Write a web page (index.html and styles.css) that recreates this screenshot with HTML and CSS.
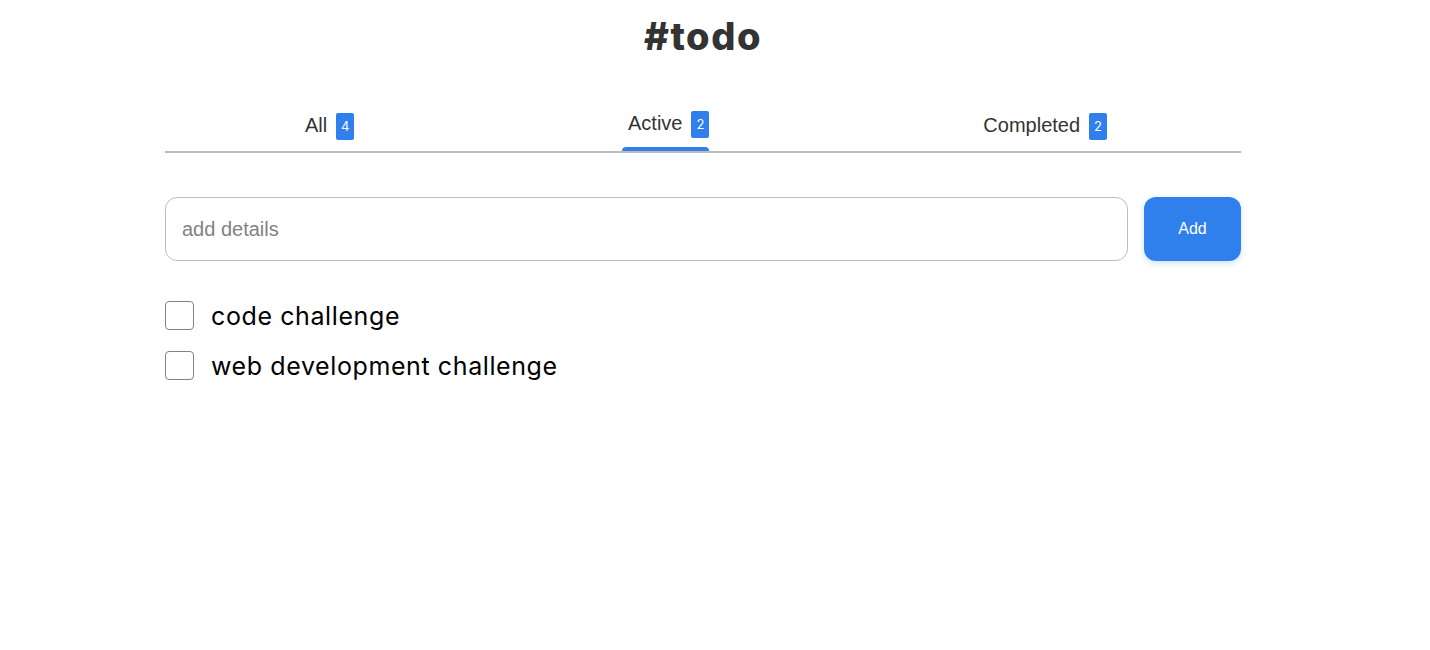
FILE: index.html
```html
<!DOCTYPE html>
<html lang="en">
<head>
<meta charset="utf-8">
<title>#todo</title>
<link rel="stylesheet" href="styles.css">
</head>
<body>
<main class="app">
  <h1 class="title">#todo</h1>
  <nav class="tabs">
    <a class="tab"><span class="tab-label"><span class="tab-text">All</span><span class="badge">4</span></span></a>
    <a class="tab tab-active"><span class="tab-label"><span class="tab-text">Active</span><span class="badge">2</span></span></a>
    <a class="tab"><span class="tab-label"><span class="tab-text">Completed</span><span class="badge">2</span></span></a>
  </nav>
  <form class="add-form">
    <input class="add-input" type="text" placeholder="add details">
    <button class="add-btn" type="button">Add</button>
  </form>
  <ul class="todo-list">
    <li class="todo-item"><span class="checkbox"></span><span class="todo-text">code challenge</span></li>
    <li class="todo-item"><span class="checkbox"></span><span class="todo-text">web development challenge</span></li>
  </ul>
</main>
</body>
</html>
```
FILE: styles.css
```css
html, body {
  margin: 0;
  padding: 0;
  background: #ffffff;
}
body {
  padding-right: 24px;
  font-family: "Liberation Sans", Arial, sans-serif;
  color: #333333;
}
.app {
  width: 1076px;
  margin: 0 auto;
}
.title {
  margin: 14px 0 0;
  text-align: center;
  font-family: Inter, "DejaVu Sans", sans-serif;
  font-weight: 800;
  font-size: 38px;
  line-height: 44px;
  letter-spacing: 1.5px;
  color: #333333;
}
.tabs {
  display: flex;
  justify-content: space-around;
  align-items: flex-end;
  margin-top: 53px;
  border-bottom: 2px solid #bdbdbd;
}
.tab {
  display: flex;
  flex-direction: column;
  padding-bottom: 11px;
  cursor: pointer;
}
.tab-label {
  display: flex;
  align-items: center;
  padding-left: 6px;
}
.tab-text {
  font-size: 20px;
  line-height: 27px;
  color: #333333;
  margin-top: -2px;
}
.badge {
  margin-left: 9px;
  width: 18px;
  height: 27px;
  line-height: 27px;
  text-align: center;
  background: #2f80ed;
  color: #ffffff;
  border-radius: 2px;
  font-family: Inter, "DejaVu Sans", sans-serif;
  font-size: 13px;
}
.tab-active {
  padding-bottom: 0;
}
.tab-active::after {
  content: "";
  display: block;
  height: 4px;
  margin-top: 9px;
  background: #2f80ed;
  border-radius: 4px 4px 0 0;
}
.add-form {
  display: flex;
  gap: 16px;
  margin-top: 44px;
}
.add-input {
  flex: 1;
  height: 64px;
  box-sizing: border-box;
  border: 1px solid #bdbdbd;
  border-radius: 12px;
  padding: 0 16px;
  font-family: "Liberation Sans", Arial, sans-serif;
  font-size: 20px;
  color: #333333;
  outline: none;
}
.add-input::placeholder {
  color: #828282;
}
.add-btn {
  width: 97px;
  height: 64px;
  border: none;
  border-radius: 12px;
  background: #2f80ed;
  color: #ffffff;
  font-family: "Liberation Sans", Arial, sans-serif;
  font-size: 16px;
  box-shadow: 0 2px 6px rgba(127, 177, 243, 0.4);
  cursor: pointer;
}
.todo-list {
  list-style: none;
  margin: 40px 0 0;
  padding: 0;
  display: flex;
  flex-direction: column;
  gap: 21px;
}
.todo-item {
  display: flex;
  align-items: center;
  gap: 17px;
  height: 29px;
}
.checkbox {
  width: 29px;
  height: 29px;
  box-sizing: border-box;
  border: 1px solid #828282;
  border-radius: 4px;
  flex-shrink: 0;
}
.todo-text {
  font-family: Inter, "DejaVu Sans", sans-serif;
  font-size: 25px;
  font-weight: 400;
  letter-spacing: 0.6px;
  color: #000000;
}
```
